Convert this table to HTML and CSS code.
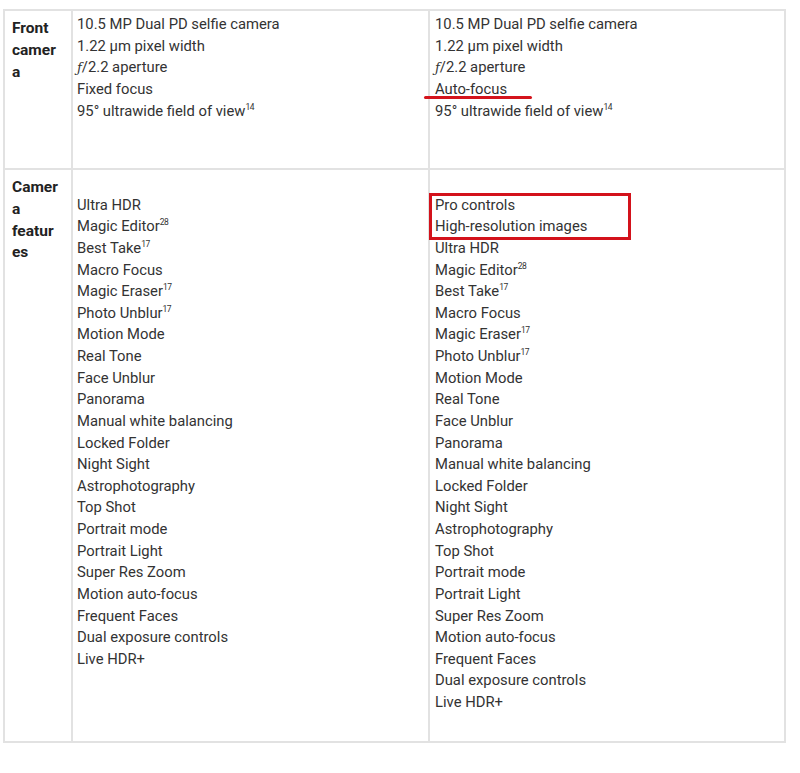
FILE: index.html
```html
<!DOCTYPE html>
<html>
<head>
<meta charset="utf-8">
<link rel="stylesheet" href="styles.css">
</head>
<body>
<div class="spec">
  <div class="cell label row1">Front camera</div>
  <div class="cell row1">
    <div class="line">10.5 MP Dual PD selfie camera</div>
    <div class="line">1.22 µm pixel width</div>
    <div class="line"><i class="f">ƒ</i>/2.2 aperture</div>
    <div class="line">Fixed focus</div>
    <div class="line">95° ultrawide field of view<sup>14</sup></div>
  </div>
  <div class="cell row1">
    <div class="line">10.5 MP Dual PD selfie camera</div>
    <div class="line">1.22 µm pixel width</div>
    <div class="line"><i class="f">ƒ</i>/2.2 aperture</div>
    <div class="line"><span class="marked">Auto-focus</span></div>
    <div class="line">95° ultrawide field of view<sup>14</sup></div>
  </div>

  <div class="cell label row2">Camera features</div>
  <div class="cell row2">
    <div class="line">&nbsp;</div>
    <div class="line">Ultra HDR</div>
    <div class="line">Magic Editor<sup>28</sup></div>
    <div class="line">Best Take<sup>17</sup></div>
    <div class="line">Macro Focus</div>
    <div class="line">Magic Eraser<sup>17</sup></div>
    <div class="line">Photo Unblur<sup>17</sup></div>
    <div class="line">Motion Mode</div>
    <div class="line">Real Tone</div>
    <div class="line">Face Unblur</div>
    <div class="line">Panorama</div>
    <div class="line">Manual white balancing</div>
    <div class="line">Locked Folder</div>
    <div class="line">Night Sight</div>
    <div class="line">Astrophotography</div>
    <div class="line">Top Shot</div>
    <div class="line">Portrait mode</div>
    <div class="line">Portrait Light</div>
    <div class="line">Super Res Zoom</div>
    <div class="line">Motion auto-focus</div>
    <div class="line">Frequent Faces</div>
    <div class="line">Dual exposure controls</div>
    <div class="line">Live HDR+</div>
  </div>
  <div class="cell row2">
    <div class="line">&nbsp;</div>
    <div class="boxed">
      <div class="line">Pro controls</div>
      <div class="line">High-resolution images</div>
    </div>
    <div class="line">Ultra HDR</div>
    <div class="line">Magic Editor<sup>28</sup></div>
    <div class="line">Best Take<sup>17</sup></div>
    <div class="line">Macro Focus</div>
    <div class="line">Magic Eraser<sup>17</sup></div>
    <div class="line">Photo Unblur<sup>17</sup></div>
    <div class="line">Motion Mode</div>
    <div class="line">Real Tone</div>
    <div class="line">Face Unblur</div>
    <div class="line">Panorama</div>
    <div class="line">Manual white balancing</div>
    <div class="line">Locked Folder</div>
    <div class="line">Night Sight</div>
    <div class="line">Astrophotography</div>
    <div class="line">Top Shot</div>
    <div class="line">Portrait mode</div>
    <div class="line">Portrait Light</div>
    <div class="line">Super Res Zoom</div>
    <div class="line">Motion auto-focus</div>
    <div class="line">Frequent Faces</div>
    <div class="line">Dual exposure controls</div>
    <div class="line">Live HDR+</div>
  </div>
</div>
</body>
</html>
```

FILE: styles.css
```css
html, body {
  margin: 0;
  padding: 0;
  background: #ffffff;
}

body {
  padding: 9px 0 0 3px;
  font-family: Roboto, "Liberation Sans", Arial, sans-serif;
  color: #333333;
}

.spec {
  display: grid;
  grid-template-columns: 68px 357px 356px;
  grid-template-rows: 159px 573px;
  width: 783px;
  border-top: 2px solid #e2e2e2;
  border-left: 2px solid #e2e2e2;
  box-sizing: border-box;
}

.cell {
  border-right: 2px solid #e2e2e2;
  border-bottom: 2px solid #e2e2e2;
  padding: 3px 4px 0 4px;
  font-size: 14.8px;
  line-height: 21.63px;
}

.cell:nth-child(3n) {
  padding-left: 5px;
}

.label {
  padding: 7px 11px 0 7px;
  font-weight: 700;
  font-size: 15.5px;
  line-height: 21.8px;
  color: #222222;
  overflow-wrap: anywhere;
}

.line {
  white-space: nowrap;
}

.f {
  font-style: italic;
  font-family: "DejaVu Serif", serif;
  font-size: 13px;
}

sup {
  font-size: 8.5px;
  line-height: 0;
  vertical-align: 6px;
  letter-spacing: -0.5px;
}

.marked {
  position: relative;
}

.marked::after {
  content: "";
  position: absolute;
  left: -11px;
  width: 108px;
  bottom: -1px;
  height: 3px;
  border-radius: 2px;
  background: #d4141c;
}

.boxed {
  position: relative;
}

.boxed::after {
  content: "";
  position: absolute;
  left: -6px;
  top: -2px;
  width: 202px;
  height: 47px;
  border: 3.5px solid #d3121b;
  box-sizing: border-box;
}
```
